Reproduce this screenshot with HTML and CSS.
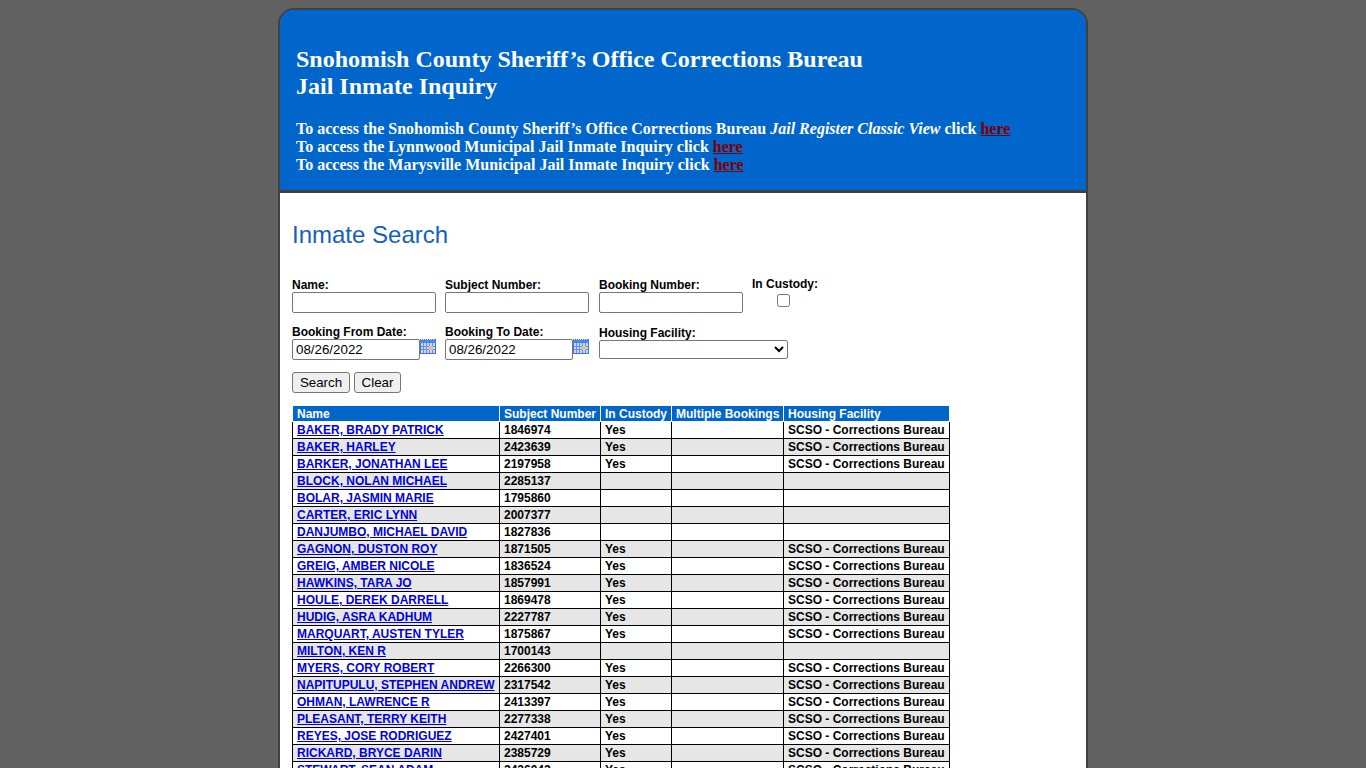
FILE: index.html
```html
<!DOCTYPE html>
<html lang="en">
<head>
  <meta charset="UTF-8">
  <title>Jail Inmate Inquiry</title>
  <link rel="stylesheet" href="styles.css">
</head>
<body>
  <div class="page">
    <div class="header">
      <h1>Snohomish County Sheriff’s Office Corrections Bureau<br>Jail Inmate Inquiry</h1>
      <p>
        To access the Snohomish County Sheriff’s Office Corrections Bureau <i>Jail Register Classic View</i> click <a href="#">here</a><br>
        To access the Lynnwood Municipal Jail Inmate Inquiry click <a href="#">here</a><br>
        To access the Marysville Municipal Jail Inmate Inquiry click <a href="#">here</a>
      </p>
    </div>
    <div class="main">
      <h2>Inmate Search</h2>
      <form>
        <div class="row">
          <div class="field"><label for="name">Name:</label><input type="text" id="name"></div>
          <div class="field"><label for="subject">Subject Number:</label><input type="text" id="subject"></div>
          <div class="field"><label for="booking">Booking Number:</label><input type="text" id="booking"></div>
          <div class="field custody"><label for="custody">In Custody:</label><input type="checkbox" id="custody"></div>
        </div>
        <div class="row">
          <div class="field">
            <label for="from">Booking From Date:</label>
            <div class="date">
              <input type="text" id="from" value="08/26/2022">
              <svg class="cal" viewBox="0 0 16 16"><use href="#calendar"/></svg>
            </div>
          </div>
          <div class="field">
            <label for="to">Booking To Date:</label>
            <div class="date">
              <input type="text" id="to" value="08/26/2022">
              <svg class="cal" viewBox="0 0 16 16"><use href="#calendar"/></svg>
            </div>
          </div>
          <div class="field housing">
            <label for="housing">Housing Facility:</label>
            <select id="housing"><option></option></select>
          </div>
        </div>
        <div class="buttons">
          <button type="button" class="search">Search</button>
          <button type="button" class="clear">Clear</button>
        </div>
      </form>

      <table>
        <colgroup><col class="c1"><col class="c2"><col class="c3"><col class="c4"><col class="c5"></colgroup>
        <thead>
          <tr><th>Name</th><th>Subject Number</th><th>In Custody</th><th>Multiple Bookings</th><th>Housing Facility</th></tr>
        </thead>
        <tbody>
          <tr><td><a href="#">BAKER, BRADY PATRICK</a></td><td>1846974</td><td>Yes</td><td></td><td>SCSO - Corrections Bureau</td></tr>
          <tr><td><a href="#">BAKER, HARLEY</a></td><td>2423639</td><td>Yes</td><td></td><td>SCSO - Corrections Bureau</td></tr>
          <tr><td><a href="#">BARKER, JONATHAN LEE</a></td><td>2197958</td><td>Yes</td><td></td><td>SCSO - Corrections Bureau</td></tr>
          <tr><td><a href="#">BLOCK, NOLAN MICHAEL</a></td><td>2285137</td><td></td><td></td><td></td></tr>
          <tr><td><a href="#">BOLAR, JASMIN MARIE</a></td><td>1795860</td><td></td><td></td><td></td></tr>
          <tr><td><a href="#">CARTER, ERIC LYNN</a></td><td>2007377</td><td></td><td></td><td></td></tr>
          <tr><td><a href="#">DANJUMBO, MICHAEL DAVID</a></td><td>1827836</td><td></td><td></td><td></td></tr>
          <tr><td><a href="#">GAGNON, DUSTON ROY</a></td><td>1871505</td><td>Yes</td><td></td><td>SCSO - Corrections Bureau</td></tr>
          <tr><td><a href="#">GREIG, AMBER NICOLE</a></td><td>1836524</td><td>Yes</td><td></td><td>SCSO - Corrections Bureau</td></tr>
          <tr><td><a href="#">HAWKINS, TARA JO</a></td><td>1857991</td><td>Yes</td><td></td><td>SCSO - Corrections Bureau</td></tr>
          <tr><td><a href="#">HOULE, DEREK DARRELL</a></td><td>1869478</td><td>Yes</td><td></td><td>SCSO - Corrections Bureau</td></tr>
          <tr><td><a href="#">HUDIG, ASRA KADHUM</a></td><td>2227787</td><td>Yes</td><td></td><td>SCSO - Corrections Bureau</td></tr>
          <tr><td><a href="#">MARQUART, AUSTEN TYLER</a></td><td>1875867</td><td>Yes</td><td></td><td>SCSO - Corrections Bureau</td></tr>
          <tr><td><a href="#">MILTON, KEN R</a></td><td>1700143</td><td></td><td></td><td></td></tr>
          <tr><td><a href="#">MYERS, CORY ROBERT</a></td><td>2266300</td><td>Yes</td><td></td><td>SCSO - Corrections Bureau</td></tr>
          <tr><td><a href="#">NAPITUPULU, STEPHEN ANDREW</a></td><td>2317542</td><td>Yes</td><td></td><td>SCSO - Corrections Bureau</td></tr>
          <tr><td><a href="#">OHMAN, LAWRENCE R</a></td><td>2413397</td><td>Yes</td><td></td><td>SCSO - Corrections Bureau</td></tr>
          <tr><td><a href="#">PLEASANT, TERRY KEITH</a></td><td>2277338</td><td>Yes</td><td></td><td>SCSO - Corrections Bureau</td></tr>
          <tr><td><a href="#">REYES, JOSE RODRIGUEZ</a></td><td>2427401</td><td>Yes</td><td></td><td>SCSO - Corrections Bureau</td></tr>
          <tr><td><a href="#">RICKARD, BRYCE DARIN</a></td><td>2385729</td><td>Yes</td><td></td><td>SCSO - Corrections Bureau</td></tr>
          <tr><td><a href="#">STEWART, SEAN ADAM</a></td><td>2436042</td><td>Yes</td><td></td><td>SCSO - Corrections Bureau</td></tr>
        </tbody>
      </table>
    </div>
  </div>

  <svg class="defs" width="0" height="0">
    <symbol id="calendar" viewBox="0 0 16 16">
      <rect x="0" y="0" width="16" height="15" fill="#4474d4"/>
      <path d="M1.5 0v1M3.5 0v1M5.5 0v1M7.5 0v1M9.5 0v1M11.5 0v1M13.5 0v1" stroke="#dbe6fa" stroke-width="1"/>
      <rect x="0" y="1" width="16" height="3" fill="#4a86ea"/>
      <rect x="1" y="4" width="14" height="10" fill="#c3d8fa"/>
      <path d="M3.5 4v10M6.5 4v10M9.5 4v10M12.5 4v10M1 7.5h14M1 10.5h14" stroke="#6690de" stroke-width="1" fill="none"/>
      <rect x="9" y="7" width="4" height="4" fill="#e0bf9a"/>
    </symbol>
  </svg>
</body>
</html>
```
FILE: styles.css
```css
html {
  overflow: hidden;
}

body {
  margin: 8px 0 0;
  height: 760px;
  overflow: hidden;
  background: #616161;
  font-family: Arial, "Liberation Sans", sans-serif;
  font-size: 12px;
  color: #000;
}

.page {
  box-sizing: border-box;
  width: 810px;
  margin: 0 auto;
  border: 2px solid #404040;
  border-radius: 16px 16px 0 0;
}

.header {
  box-sizing: border-box;
  height: 183px;
  padding: 36px 16px 0;
  background: #0066cc;
  border-bottom: 3px solid #404040;
  border-radius: 14px 14px 0 0;
  color: #fff;
  font-family: "Times New Roman", "Liberation Serif", serif;
}

.header h1 {
  margin: 0;
  font-size: 24px;
  line-height: 27px;
}

.header p {
  margin: 20px 0 0;
  font-size: 16px;
  line-height: 18px;
  font-weight: bold;
}

.header a {
  color: #800000;
}

.main {
  padding: 28px 12px 20px;
  background: #fff;
}

h2 {
  margin: 0 0 27px;
  font-size: 24px;
  line-height: 28px;
  font-weight: normal;
  color: #1560bd;
}

label {
  display: block;
  height: 15px;
  line-height: 16px;
  font-weight: bold;
}

.row {
  display: grid;
  grid-template-columns: 153px 154px 153px 80px;
  height: 47px;
  padding-top: 1px;
  box-sizing: border-box;
}

.row input[type="text"] {
  display: block;
  box-sizing: border-box;
  width: 144px;
  height: 21px;
  margin: 0;
  padding: 1px 3px;
  border: 1px solid #767676;
  border-radius: 2px;
  font: 13.333px Arial, "Liberation Sans", sans-serif;
}

.custody label {
  margin-top: -1px;
}

.custody input {
  display: block;
  margin: 3px 0 0 25px;
}

.date {
  display: flex;
}

.row .date input {
  width: 128px;
}

.cal {
  width: 16px;
  height: 16px;
}

.housing label {
  margin-top: 1px;
}

select {
  display: block;
  box-sizing: border-box;
  width: 189px;
  height: 19px;
  background: #fff;
  border: 1px solid #767676;
  border-radius: 2px;
}

.buttons {
  display: flex;
  gap: 4px;
  padding-top: 2px;
}

button {
  height: 21px;
  padding: 0;
  background: #efefef;
  border: 1px solid #767676;
  border-radius: 3px;
  font: 13.333px Arial, "Liberation Sans", sans-serif;
}

.search {
  width: 58px;
}

.clear {
  width: 47px;
}

table {
  width: 658px;
  margin-top: 12px;
  border-collapse: collapse;
  table-layout: fixed;
  font-weight: bold;
}

.c1 { width: 207px; }
.c2 { width: 101px; }
.c3 { width: 71px; }
.c4 { width: 112px; }
.c5 { width: 166px; }

th, td {
  height: 16px;
  padding: 0 4px;
  line-height: 16px;
  text-align: left;
  white-space: nowrap;
  border: 1px solid #000;
}

th {
  height: 13px;
  padding-top: 2px;
  line-height: 13px;
  background: #0066cc;
  color: #fff;
  border-color: #fff;
}

tbody tr:nth-child(even) {
  background: #e6e6e6;
}

td a {
  color: #0000e0;
}

.defs {
  display: block;
}
```
